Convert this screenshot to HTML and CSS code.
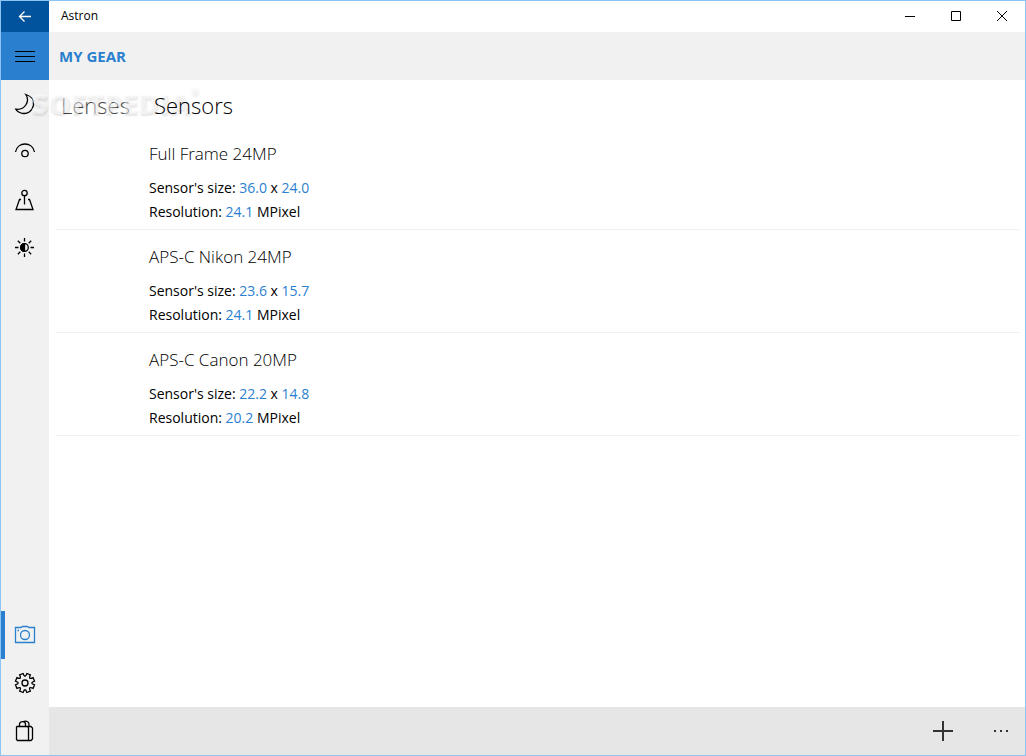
FILE: index.html
```html
<!DOCTYPE html>
<html lang="en">
<head>
  <meta charset="UTF-8">
  <meta name="viewport" content="width=device-width, initial-scale=1.0">
  <title>Astron</title>
  <link rel="stylesheet" href="styles.css">
</head>
<body>
  <div class="window">
    <!-- Title bar -->
    <div class="title-bar">
      <button class="back-btn" aria-label="Back">
        <svg width="14" height="14" viewBox="0 0 14 14"><path d="M13 6.500H1.500M6.500 1.500l-5 5 5 5"/></svg>
      </button>
      <span class="app-name">Astron</span>
      <div class="window-controls">
        <button aria-label="Minimize"><svg width="10" height="12" viewBox="0 0 10 12"><path d="M0 5.500h10"/></svg></button>
        <button aria-label="Maximize"><svg width="10" height="12" viewBox="0 0 10 12"><path d="M.5.5h9v9h-9z"/></svg></button>
        <button aria-label="Close"><svg width="10" height="12" viewBox="0 0 10 12"><path d="M0 0l10 10M10 0L0 10"/></svg></button>
      </div>
    </div>

    <!-- Header -->
    <header>
      <button class="hamburger" aria-label="Menu">
        <span></span>
        <span></span>
        <span></span>
      </button>
      <h1>MY GEAR</h1>
    </header>

    <div class="layout">
      <!-- Sidebar -->
      <nav class="sidebar">
        <div class="nav-group">
          <a href="#" aria-label="Moon">
            <svg width="22" height="22" viewBox="0 0 22 22"><path d="M11.800 1.500C17 3 20.300 7 19.500 12C18.300 18.500 13 21.200 8.500 20.300C5.500 19.700 3 18.500 1.800 16.200C6 16.800 9.500 15.500 11.800 12C14 8.500 14.200 5 11.800 1.500z"/></svg>
          </a>
          <a href="#" aria-label="Visibility">
            <svg width="22" height="22" viewBox="0 0 22 22"><path d="M1.500 11C3.500 .3 18.500 .3 20.500 11"/><circle cx="11" cy="12.500" r="3.200"/></svg>
          </a>
          <a href="#" aria-label="Location">
            <svg width="22" height="22" viewBox="0 0 22 22"><circle cx="10.500" cy="4" r="2.700"/><path d="M10.500 6.700V15.500M7 10.500H5.500L2 20.500h17l-3.500-10H14"/></svg>
          </a>
          <a href="#" aria-label="Brightness">
            <svg width="22" height="22" viewBox="0 0 22 22"><circle cx="10.500" cy="10.500" r="3.800"/><path class="solid" d="M10.500 6.700a3.800 3.800 0 0 0 0 7.600z"/><path d="M10.500 1v3.500M10.500 16.500V20M1 10.500h3.500M16.500 10.500H20M3.800 3.800l2.500 2.500M14.700 14.700l2.500 2.500M3.800 17.200l2.500-2.500M14.700 6.300l2.500-2.500"/></svg>
          </a>
        </div>
        <div class="nav-group">
          <a href="#" class="active" aria-label="My gear">
            <svg width="22" height="22" viewBox="0 0 22 22"><path d="M1.500 3.500h5.500L8.500 2.500h5l1.500 1h5.500v15h-19z"/><circle cx="11" cy="11" r="4.500"/><path d="M3.500 6.500h1.500"/></svg>
          </a>
          <a href="#" aria-label="Settings">
            <svg width="22" height="22" viewBox="0 0 22 22"><path d="M20.500 9.100Q15 11 20.500 12.900L19.100 16.350Q13.800 13.800 16.350 19.100L12.900 20.500Q11 15 9.100 20.500L5.650 19.100Q8.200 13.800 2.900 16.350L1.500 12.900Q7 11 1.500 9.100L2.900 5.650Q8.200 8.200 5.650 2.900L9.100 1.500Q11 7 12.900 1.500L16.350 2.900Q13.800 8.200 19.100 5.650z"/><circle cx="11" cy="11" r="3"/></svg>
          </a>
          <a href="#" aria-label="Store">
            <svg width="22" height="22" viewBox="0 0 22 22"><path d="M3 6.500h14l1.500 1.500v11l-1.500 1.500H3.500l-1-1V7zM13.500 6.500l1 1.500v12.500"/><path d="M5.500 6.500V4C5.500.8 11.500.8 11.500 4V6.500M9 2C11 .6 15 1 15 4V6.500"/></svg>
          </a>
        </div>
      </nav>

      <main>
        <div class="tabs">
          <a href="#">Lenses</a>
          <a href="#" class="current">Sensors</a>
        </div>

        <ul class="gear-list">
          <li>
            <h2>Full Frame 24MP</h2>
            <p>Sensor's size: <b>36.0</b> x <b>24.0</b></p>
            <p>Resolution: <b>24.1</b> MPixel</p>
          </li>
          <li>
            <h2>APS-C Nikon 24MP</h2>
            <p>Sensor's size: <b>23.6</b> x <b>15.7</b></p>
            <p>Resolution: <b>24.1</b> MPixel</p>
          </li>
          <li>
            <h2>APS-C Canon 20MP</h2>
            <p>Sensor's size: <b>22.2</b> x <b>14.8</b></p>
            <p>Resolution: <b>20.2</b> MPixel</p>
          </li>
        </ul>

        <!-- Command bar -->
        <footer>
          <button class="add-btn" aria-label="Add"><svg width="20" height="20" viewBox="0 0 20 20"><path d="M10 0v20M0 10h20"/></svg></button>
          <button class="more-btn" aria-label="More"><span></span><span></span><span></span></button>
        </footer>
      </main>

      <div class="watermark">SOFTPEDIA<sup>®</sup></div>
    </div>
  </div>
</body>
</html>
```

FILE: styles.css
```css
/* Basic Styles */
* {
  box-sizing: border-box;
}

body {
  font-family: "Open Sans", "Noto Sans", sans-serif;
  margin: 0;
  color: #000;
  background: #fff;
}

h1, h2, p, ul {
  margin: 0;
  padding: 0;
}

button {
  border: none;
  padding: 0;
  background: none;
  display: flex;
  align-items: center;
  justify-content: center;
}

a {
  color: inherit;
  text-decoration: none;
}

svg {
  display: block;
  fill: none;
  stroke: currentColor;
  stroke-width: 1.3;
}

.solid {
  fill: currentColor;
}

.window {
  display: flex;
  flex-direction: column;
  min-height: 100vh;
  border: 1px solid #8cc5f4;
}

/* Title bar */
.title-bar {
  display: flex;
  align-items: stretch;
  height: 31px;
}

.back-btn {
  width: 48px;
  background: #00539c;
  color: #fff;
}

.app-name {
  flex: 1;
  padding-left: 12px;
  font-size: 12px;
  line-height: 30px;
}

.window-controls {
  display: flex;
}

.window-controls button {
  width: 46px;
}

.window-controls svg {
  stroke-width: 1;
}

/* Header */
header {
  display: flex;
  align-items: center;
  height: 48px;
  background: #f1f1f1;
}

.hamburger {
  width: 48px;
  height: 48px;
  flex-direction: column;
  gap: 4px;
  background: #2a80cf;
}

.hamburger span {
  width: 20px;
  height: 1px;
  background: #000;
}

header h1 {
  padding-left: 10px;
  font-size: 15px;
  font-weight: 700;
  color: #2a80cf;
}

/* Sidebar */
.layout {
  position: relative;
  display: flex;
  flex: 1;
}

.sidebar {
  display: flex;
  flex-direction: column;
  justify-content: space-between;
  width: 48px;
  background: #f1f1f1;
}

.sidebar a {
  display: flex;
  align-items: center;
  justify-content: center;
  height: 48px;
}

.sidebar a.active {
  color: #2a80cf;
  border-left: 4px solid #2a80cf;
  padding-right: 4px;
}

/* Main Content */
main {
  display: flex;
  flex-direction: column;
  flex: 1;
}

.tabs {
  display: flex;
  gap: 24px;
  padding: 8px 12px 5px;
  font-size: 22px;
  font-weight: 300;
  line-height: 34px;
}

.tabs a {
  color: #444;
}

.tabs a.current {
  position: relative;
  z-index: 1;
  color: #000;
}

.gear-list {
  flex: 1;
  padding: 0 6px 0 7px;
  list-style: none;
}

.gear-list li {
  padding: 13px 0 5px 93px;
  border-bottom: 1px solid #f0f0f0;
}

.gear-list h2 {
  margin-bottom: 8px;
  font-size: 17px;
  font-weight: 300;
  line-height: 28px;
}

.gear-list p {
  font-size: 14px;
  line-height: 24px;
}

.gear-list b {
  font-weight: 400;
  color: #2a80cf;
}

/* Command bar */
footer {
  display: flex;
  justify-content: flex-end;
  height: 48px;
  background: #e6e6e6;
}

.add-btn {
  width: 68px;
}

.add-btn svg {
  stroke: #333;
  stroke-width: 2;
}

.more-btn {
  width: 48px;
  gap: 4px;
}

.more-btn span {
  width: 2px;
  height: 2px;
  background: #333;
}

/* Watermark */
.watermark {
  position: absolute;
  top: 6px;
  left: 30px;
  font-size: 29px;
  font-weight: 800;
  line-height: 34px;
  color: rgba(255, 255, 255, 0.5);
  text-shadow: 1px 2px 2px rgba(0, 0, 0, 0.1);
  pointer-events: none;
}

.watermark sup {
  font-size: 10px;
  line-height: 10px;
  vertical-align: top;
}
```
